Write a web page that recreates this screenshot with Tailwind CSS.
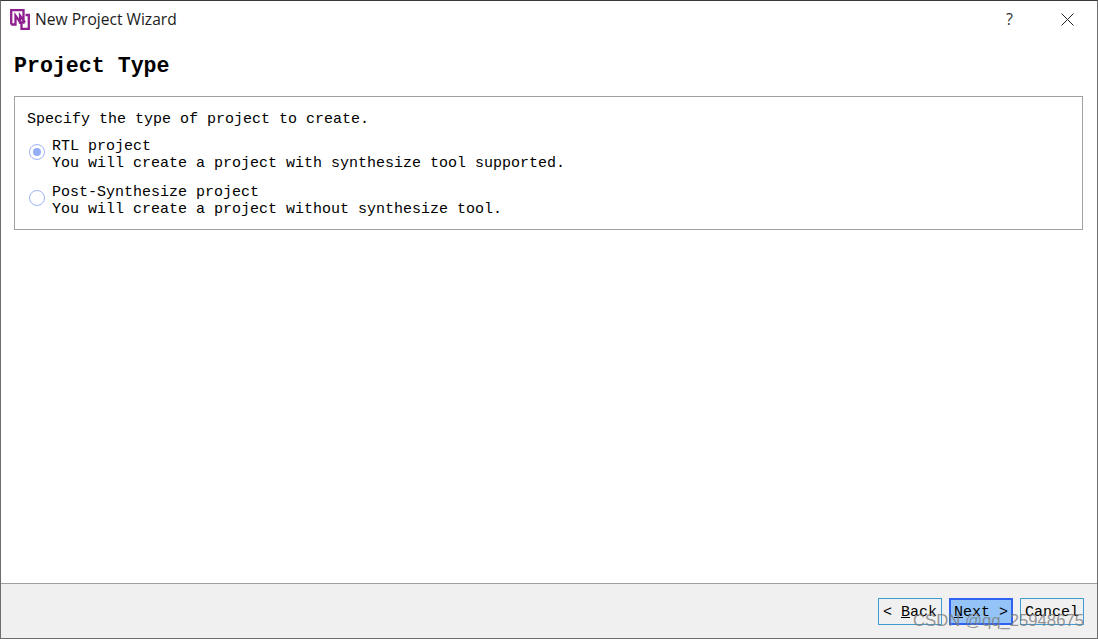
<!DOCTYPE html>
<html lang="en">
<head>
  <meta charset="UTF-8" />
  <title>New Project Wizard</title>
  <script src="https://cdn.jsdelivr.net/npm/@tailwindcss/browser@4"></script>
</head>
<body class="bg-white overflow-hidden">
  <div class="w-[1098px] h-[639px] flex flex-col relative border-t border-t-[#3a3a3a] border-l border-l-[#6e6e6e] border-r border-r-[#6e6e6e] border-b border-b-[#6e6e6e] bg-white font-['Liberation_Mono',monospace] text-black">

    <!-- title bar -->
    <div class="h-[36px] flex items-center pl-[9px] shrink-0">
      <svg width="20" height="21" viewBox="0 0 20 21" fill="none" class="shrink-0">
        <path d="M1.2 15.5V1.2H13.5V13.5H10V6.5L15 13.5" stroke="#8f1f8f" stroke-width="2.3" />
        <path d="M1.2 15.5H5.5V6.5L11.5 15V19.8H18.8V6H15.5" stroke="#8f1f8f" stroke-width="2.3" />
      </svg>
      <span class="ml-[5px] mt-[2px] font-['Open_Sans',sans-serif] text-[15.6px] text-[#1c1c1c]">New Project Wizard</span>
      <span class="ml-auto mr-[48px] font-['Open_Sans',sans-serif] text-[16px] text-[#333]">?</span>
      <svg width="13" height="13" viewBox="0 0 13 13" class="mr-[23px]">
        <path d="M0.5 0.5L12.5 12.5M12.5 0.5L0.5 12.5" stroke="#222" stroke-width="1" />
      </svg>
    </div>

    <!-- page -->
    <div class="flex-1 px-[13px]">
      <h1 class="text-[21.6px] leading-[24px] font-bold mt-[17px]">Project Type</h1>
      <div class="mt-[18px] w-[1069px] h-[134px] border border-[#a0a0a0] pl-[12px] pt-[14px] text-[15px] leading-[17px]">
        <p>Specify the type of project to create.</p>
        <div class="mt-[10px] flex items-start">
          <span class="w-[16px] h-[16px] rounded-full border border-[#9db4f5] flex items-center justify-center ml-[2px] mt-[6px] shrink-0">
            <span class="w-[8px] h-[8px] rounded-full bg-[#94aef8]"></span>
          </span>
          <div class="ml-[7px]">
            <p>RTL project</p>
            <p>You will create a project with synthesize tool supported.</p>
          </div>
        </div>
        <div class="mt-[12px] flex items-start">
          <span class="w-[16px] h-[16px] rounded-full border border-[#9db4f5] ml-[2px] mt-[6px] shrink-0"></span>
          <div class="ml-[7px]">
            <p>Post-Synthesize project</p>
            <p>You will create a project without synthesize tool.</p>
          </div>
        </div>
      </div>
    </div>

    <!-- footer -->
    <div class="h-[55px] shrink-0 bg-[#f0f0f0] border-t border-t-[#a0a0a0] flex justify-end items-start gap-[7px] pt-[14px] pr-[13px] text-[15px]">
      <button class="w-[64px] h-[27px] border border-[#3f9bd0] bg-[#f0f0f0] leading-[28px] text-center">&lt; <span class="underline">B</span>ack</button>
      <button class="w-[64px] h-[27px] border-2 border-[#2f62f0] bg-[#94c4f7] leading-[26px] text-center"><span class="underline">N</span>ext &gt;</button>
      <button class="w-[64px] h-[27px] border border-[#3f9bd0] bg-[#f0f0f0] leading-[28px] text-center">Cancel</button>
    </div>

    <!-- watermark over the buttons -->
    <span class="absolute right-[13px] bottom-[7px] font-['Liberation_Sans',sans-serif] text-[16.7px] leading-[20px] text-[#7d7d7d]/80">CSDN @qq_25948675</span>
  </div>
</body>
</html>
